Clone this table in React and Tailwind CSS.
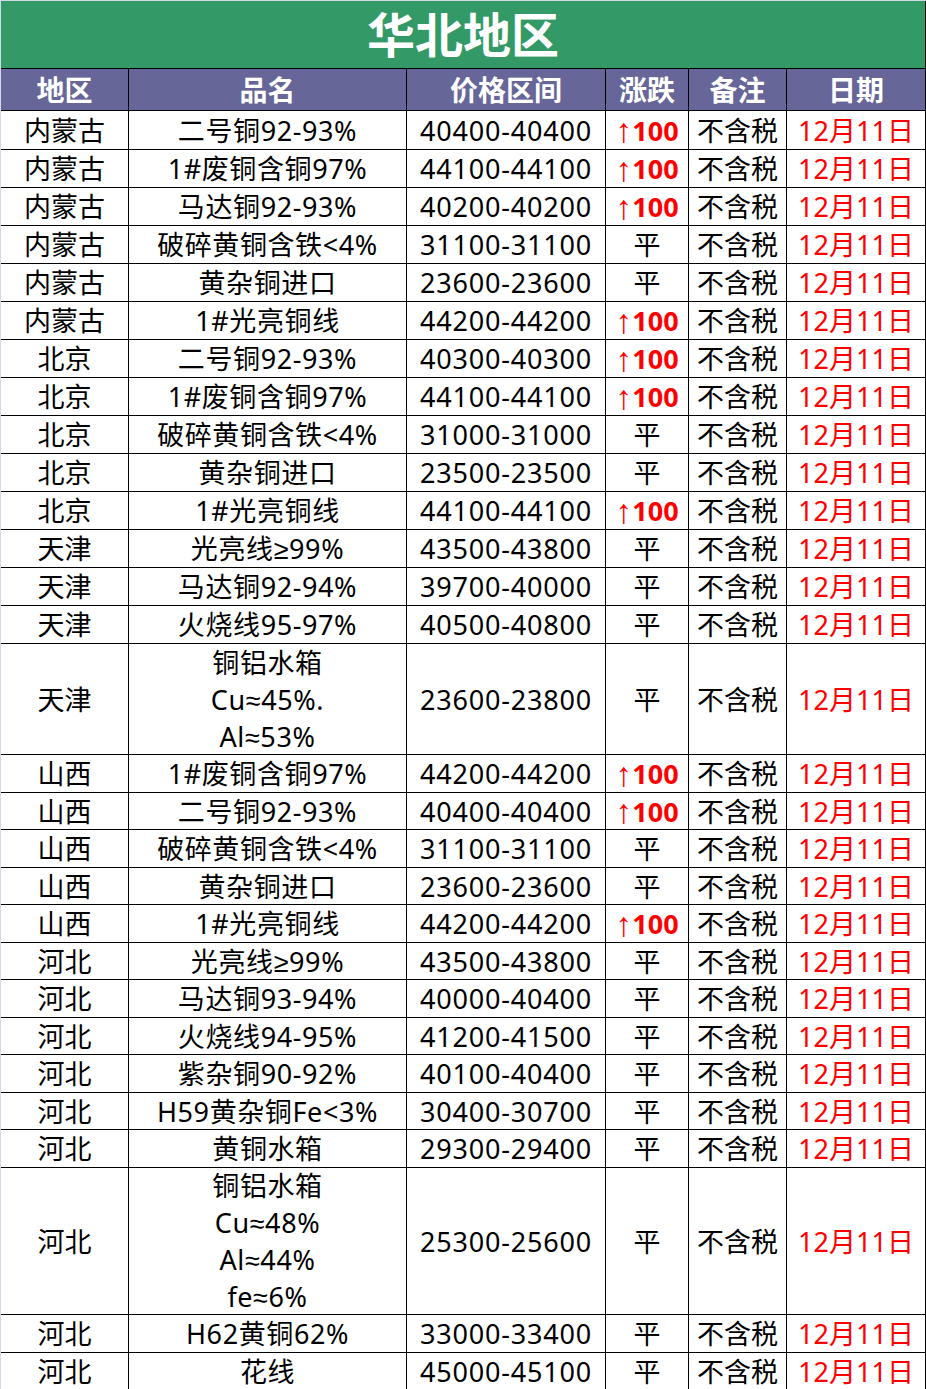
const rows = [
  ["内蒙古", ["二号铜92-93%"], "40400-40400", "up", 39],
  ["内蒙古", ["1#废铜含铜97%"], "44100-44100", "up", 38],
  ["内蒙古", ["马达铜92-93%"], "40200-40200", "up", 38],
  ["内蒙古", ["破碎黄铜含铁<4%"], "31100-31100", "flat", 38],
  ["内蒙古", ["黄杂铜进口"], "23600-23600", "flat", 38],
  ["内蒙古", ["1#光亮铜线"], "44200-44200", "up", 38],
  ["北京", ["二号铜92-93%"], "40300-40300", "up", 38],
  ["北京", ["1#废铜含铜97%"], "44100-44100", "up", 38],
  ["北京", ["破碎黄铜含铁<4%"], "31000-31000", "flat", 38],
  ["北京", ["黄杂铜进口"], "23500-23500", "flat", 38],
  ["北京", ["1#光亮铜线"], "44100-44100", "up", 38],
  ["天津", ["光亮线≥99%"], "43500-43800", "flat", 38],
  ["天津", ["马达铜92-94%"], "39700-40000", "flat", 38],
  ["天津", ["火烧线95-97%"], "40500-40800", "flat", 38],
  ["天津", ["铜铝水箱", "Cu≈45%.", "Al≈53%"], "23600-23800", "flat", 111],
  ["山西", ["1#废铜含铜97%"], "44200-44200", "up", 38],
  ["山西", ["二号铜92-93%"], "40400-40400", "up", 37],
  ["山西", ["破碎黄铜含铁<4%"], "31100-31100", "flat", 38],
  ["山西", ["黄杂铜进口"], "23600-23600", "flat", 37],
  ["山西", ["1#光亮铜线"], "44200-44200", "up", 38],
  ["河北", ["光亮线≥99%"], "43500-43800", "flat", 37],
  ["河北", ["马达铜93-94%"], "40000-40400", "flat", 38],
  ["河北", ["火烧线94-95%"], "41200-41500", "flat", 37],
  ["河北", ["紫杂铜90-92%"], "40100-40400", "flat", 38],
  ["河北", ["H59黄杂铜Fe<3%"], "30400-30700", "flat", 37],
  ["河北", ["黄铜水箱"], "29300-29400", "flat", 38],
  ["河北", ["铜铝水箱", "Cu≈48%", "Al≈44%", "fe≈6%"], "25300-25600", "flat", 147],
  ["河北", ["H62黄铜62%"], "33000-33400", "flat", 38],
  ["河北", ["花线"], "45000-45100", "flat", 37],
];

const font = { fontFamily: '"Noto Sans", "Liberation Sans", "Noto Sans CJK SC", sans-serif' };

function Cell({ w, children, className = "" }) {
  return (
    <div
      className={`flex shrink-0 flex-col items-center justify-center border-r border-black text-center ${w} ${className}`}
    >
      {children}
    </div>
  );
}

export default function App() {
  return (
    <div
      className="w-[926px] border-l border-t border-[#d3d9e6] bg-white text-[27px] text-black"
      style={font}
    >
      {/* Title */}
      <div className="flex h-[68px] items-center justify-center border-b border-r border-black bg-[#339966]">
        <h1 className="text-[48px] font-bold leading-none text-white">华北地区</h1>
      </div>

      {/* Header */}
      <div className="flex h-[42px] border-b border-black bg-[#666699] text-[28px] font-bold leading-none text-white">
        <Cell w="w-[128px]">地区</Cell>
        <Cell w="w-[278px]">品名</Cell>
        <Cell w="w-[199px]">价格区间</Cell>
        <Cell w="w-[83px]">涨跌</Cell>
        <Cell w="w-[98px]">备注</Cell>
        <Cell w="w-[139px]">日期</Cell>
      </div>

      {rows.map(([region, name, price, trend, h], i) => (
        <div
          key={i}
          className="flex border-b border-black leading-[37px]"
          style={{ height: h }}
        >
          <Cell w="w-[128px]">{region}</Cell>
          <Cell w="w-[278px]" className="tracking-[0.6px]">
            {name.map((line) => (
              <span key={line}>{line}</span>
            ))}
          </Cell>
          <Cell w="w-[199px]" className="tracking-[0.8px]">{price}</Cell>
          <Cell w="w-[83px]">
            {trend === "up" ? (
              <span className="flex items-center text-[#ff0000]">
                <span
                  className="inline-block text-[34px] font-normal leading-none"
                  style={{ fontFamily: '"Liberation Sans", sans-serif' }}
                >
                  ↑
                </span>
                <span className="font-bold">100</span>
              </span>
            ) : (
              "平"
            )}
          </Cell>
          <Cell w="w-[98px]">不含税</Cell>
          <Cell w="w-[139px]" className="text-[#ff0000]">12月11日</Cell>
        </div>
      ))}
    </div>
  );
}
